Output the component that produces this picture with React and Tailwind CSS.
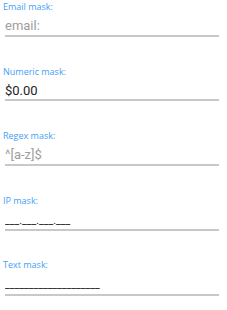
import React from 'react';

const fields = [
    { label: 'Email mask:', placeholder: 'email:', value: '' },
    { label: 'Numeric mask:', placeholder: '', value: '$0.00' },
    { label: 'Regex mask:', placeholder: '^[a-z]$', value: '' },
    { label: 'IP mask:', placeholder: '', value: '___.___.___.___', small: true },
    { label: 'Text mask:', placeholder: '', value: '____________________', small: true },
];

export default function App() {
    return (
        <div className="w-[227px] h-[310px] bg-white font-['Roboto',sans-serif]">
            {fields.map((f) => (
                <div key={f.label} className="h-[64.5px]">
                    <div className="pl-[3px] pt-[1px] text-[9px] leading-[12px] text-[#45a0f5] font-['Open_Sans',sans-serif]">
                        {f.label}
                    </div>
                    <input
                        readOnly
                        value={f.value}
                        placeholder={f.placeholder}
                        className={`ml-[5px] -mt-[1px] w-[214px] h-[20px] border-b-2 border-[#c8c8c8] bg-transparent outline-none text-[#222] placeholder:text-[#9e9e9e] ${f.small ? 'text-[10.5px]' : 'text-[13px]'}`}
                    />
                </div>
            ))}
        </div>
    );
}
